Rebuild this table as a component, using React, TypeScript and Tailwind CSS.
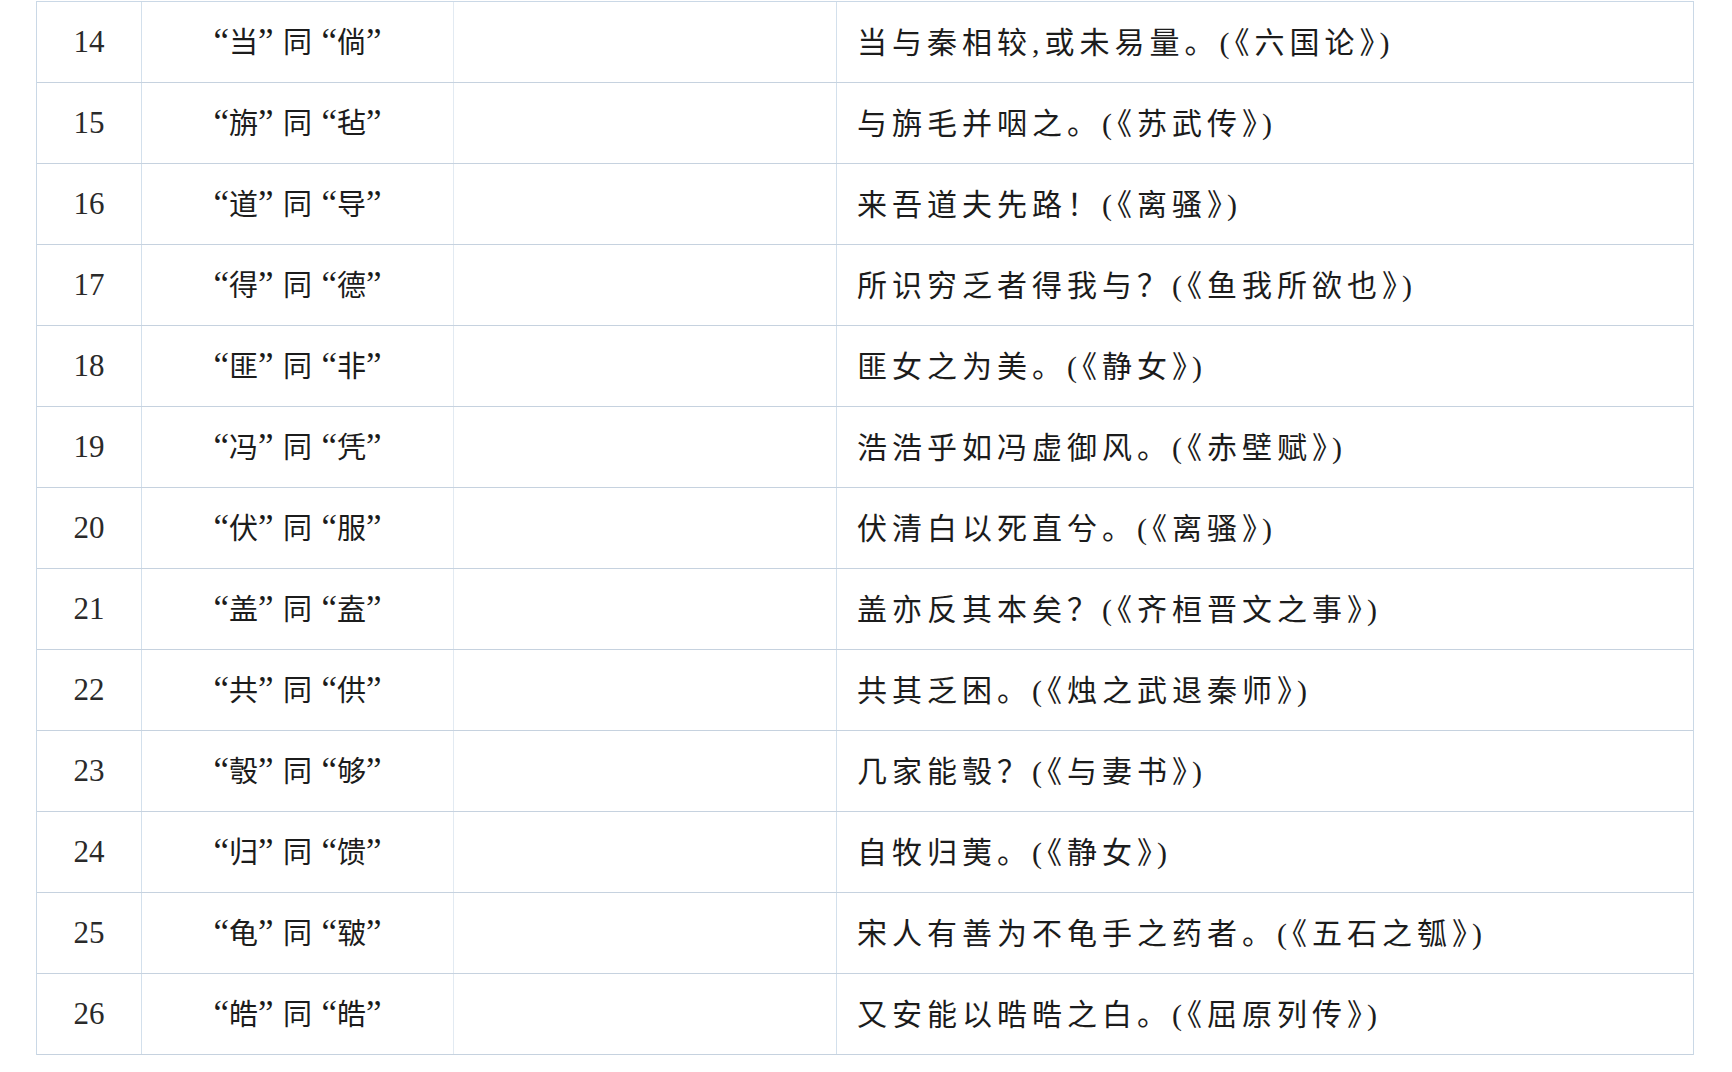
import React from "react";

const rows = [
  { n: "14", pair: ["当", "倘"], text: "当与秦相较,或未易量。(《六国论》)" },
  { n: "15", pair: ["旃", "毡"], text: "与旃毛并咽之。(《苏武传》)" },
  { n: "16", pair: ["道", "导"], text: "来吾道夫先路！(《离骚》)" },
  { n: "17", pair: ["得", "德"], text: "所识穷乏者得我与？(《鱼我所欲也》)" },
  { n: "18", pair: ["匪", "非"], text: "匪女之为美。(《静女》)" },
  { n: "19", pair: ["冯", "凭"], text: "浩浩乎如冯虚御风。(《赤壁赋》)" },
  { n: "20", pair: ["伏", "服"], text: "伏清白以死直兮。(《离骚》)" },
  { n: "21", pair: ["盖", "盍"], text: "盖亦反其本矣？(《齐桓晋文之事》)" },
  { n: "22", pair: ["共", "供"], text: "共其乏困。(《烛之武退秦师》)" },
  { n: "23", pair: ["彀", "够"], text: "几家能彀？(《与妻书》)" },
  { n: "24", pair: ["归", "馈"], text: "自牧归荑。(《静女》)" },
  { n: "25", pair: ["龟", "皲"], text: "宋人有善为不龟手之药者。(《五石之瓠》)" },
  { n: "26", pair: ["皓", "皓"], text: "又安能以晧晧之白。(《屈原列传》)" },
];

const font = { fontFamily: '"Liberation Serif", "Noto Sans CJK SC", serif' };

// “X”同“Y” with wide, CJK-style quote slots
const Pair = ({ a, b }: { a: string; b: string }) => (
  <span className="flex items-baseline text-[29px]">
    <span className="inline-block w-[22px] text-right text-[35px]">“</span>
    <span>{a}</span>
    <span className="inline-block w-[25px] text-left text-[35px]">”</span>
    <span>同</span>
    <span className="inline-block w-[25px] text-right text-[35px]">“</span>
    <span>{b}</span>
    <span className="inline-block w-[22px] text-left text-[35px]">”</span>
  </span>
);

const App = () => {
  return (
    <div className="min-h-screen bg-white pl-[36px] pt-[1px] text-[#1c1c1c]" style={font}>
      <div className="w-[1658px] border-x border-t border-[#cad8e6]">
        {rows.map((r) => (
          <div
            key={r.n}
            className="grid h-[81px] grid-cols-[105px_312px_383px_1fr] border-b border-[#c6d2df]"
          >
            <div className="flex items-center justify-center border-r border-[#d3e0ec] text-[31px] text-[#2a2a2a]">
              {r.n}
            </div>
            <div className="flex items-center justify-center border-r border-[#e2eaf2]">
              <Pair a={r.pair[0]} b={r.pair[1]} />
            </div>
            <div className="border-r border-[#d3e0ec]" />
            <div className="flex items-center pl-[20px] text-[30px] tracking-[5px]">
              {r.text}
            </div>
          </div>
        ))}
      </div>
    </div>
  );
};

export default App;
